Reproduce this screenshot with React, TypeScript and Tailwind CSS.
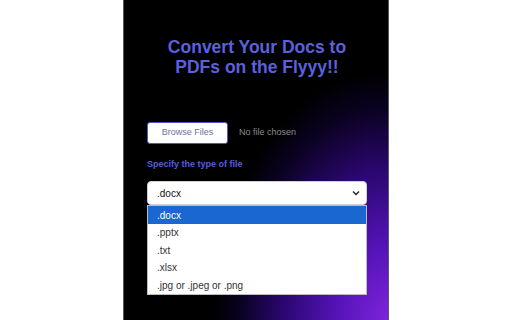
import React from "react";

export default function App() {
  const items = [".docx", ".pptx", ".txt", ".xlsx", ".jpg or .jpeg or .png"];
  return (
    <div
      className="flex h-[320px] w-[512px] justify-center bg-white"
      style={{ fontFamily: '"Liberation Sans", Arial, sans-serif' }}
    >
      <div className="relative h-[320px] w-[266px] border-x border-[#5a5a5a] bg-[radial-gradient(ellipse_175px_250px_at_100%_100%,#7d24dc_0%,#5413b6_30%,#2a0770_60%,#0a0220_85%,#000_100%)]">
        <div className="flex flex-col pl-[23px] pr-[21px] pt-[37px]">
          <h1 className="text-center text-[17.5px] font-bold leading-[20px] text-[#5b60de]">
            Convert Your Docs to
            <br />
            PDFs on the Flyyy!!
          </h1>
          <div className="mt-[45px] flex items-center gap-[11px]">
            <button className="flex h-[22px] w-[81px] items-center justify-center rounded-[3px] border border-[#5055cf] bg-white text-[9px] text-[#6b6fa3]">
              Browse Files
            </button>
            <span className="text-[9px] text-[#8a8a8a]">No file chosen</span>
          </div>
          <div className="mt-[14px] text-[9px] font-bold leading-[12px] text-[#5a5ed6]">
            Specify the type of file
          </div>
          <div className="mt-[11px] flex h-[24px] w-[220px] items-center justify-between rounded-[4px] border border-[#cfcfcf] bg-white pl-[9px] pr-[6px] text-[10px] text-[#111]">
            <span>.docx</span>
            <svg width="8" height="6" viewBox="0 0 8 6" fill="none">
              <path d="M1 1.5 L4 4.5 L7 1.5" stroke="#222" strokeWidth="1.4" />
            </svg>
          </div>
        </div>
        <div className="absolute left-[23px] top-[205px] w-[220px] border border-[#bdbdbd] bg-white text-[10px]">
          {items.map((it, i) => (
            <div
              key={it}
              className={
                i === 0
                  ? "flex h-[18px] items-center bg-[#1a67d2] pl-[9px] text-white"
                  : "flex h-[17.6px] items-center pl-[9px] text-[#333]"
              }
            >
              {it}
            </div>
          ))}
        </div>
      </div>
    </div>
  );
}
